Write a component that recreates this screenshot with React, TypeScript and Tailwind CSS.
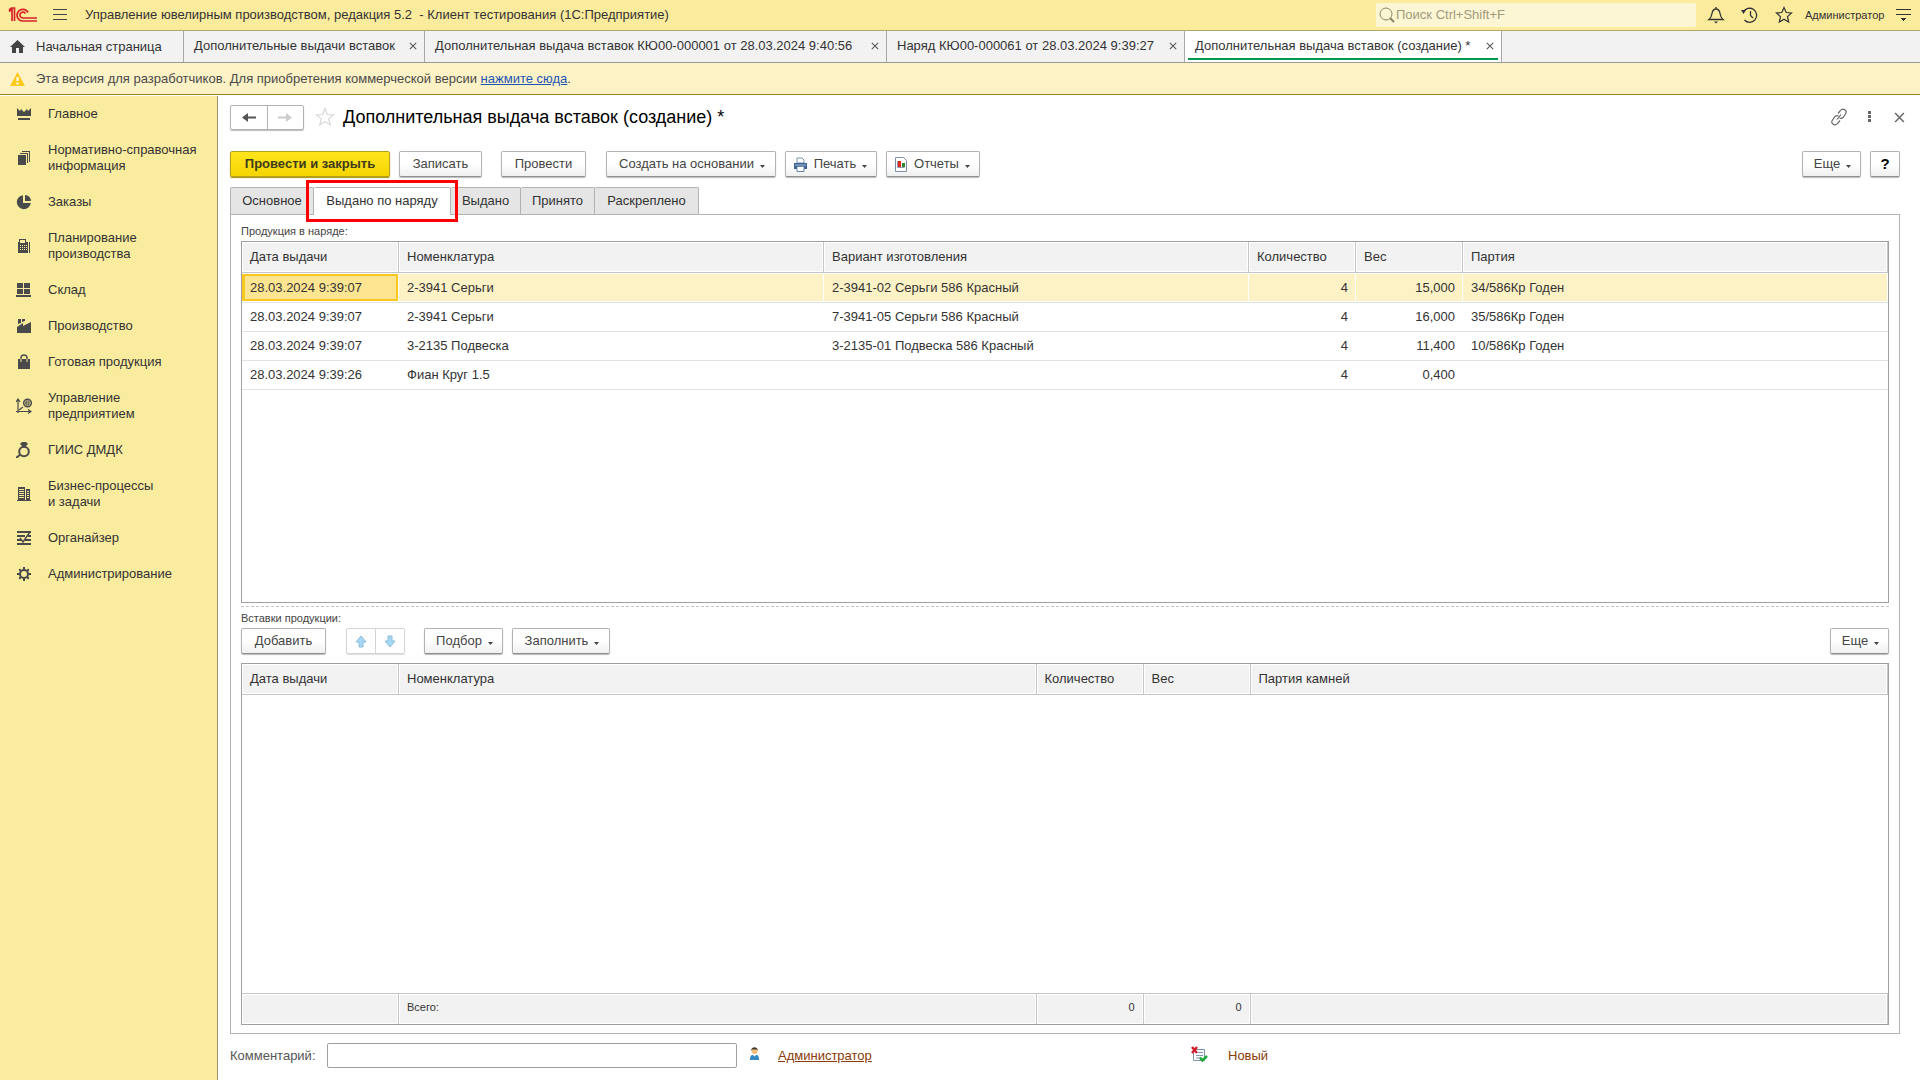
import React from 'react';

type Align = 'left' | 'right';

interface Column {
  title: string;
  width?: string;
  align?: Align;
}

const sections = [
  { icon: 'crown', lines: ['Главное'] },
  { icon: 'books', lines: ['Нормативно-справочная', 'информация'] },
  { icon: 'pie', lines: ['Заказы'] },
  { icon: 'calc', lines: ['Планирование', 'производства'] },
  { icon: 'store', lines: ['Склад'] },
  { icon: 'factory', lines: ['Производство'] },
  { icon: 'bag', lines: ['Готовая продукция'] },
  { icon: 'chart', lines: ['Управление', 'предприятием'] },
  { icon: 'ring', lines: ['ГИИС ДМДК'] },
  { icon: 'building', lines: ['Бизнес-процессы', 'и задачи'] },
  { icon: 'organizer', lines: ['Органайзер'] },
  { icon: 'gear', lines: ['Администрирование'] },
];

const windows = [
  { title: 'Дополнительные выдачи вставок', width: 'w-[241px]' },
  { title: 'Дополнительная выдача вставок КЮ00-000001 от 28.03.2024 9:40:56', width: 'w-[462px]' },
  { title: 'Наряд КЮ00-000061 от 28.03.2024 9:39:27', width: 'w-[298px]' },
  { title: 'Дополнительная выдача вставок (создание) *', width: 'w-[317px]', active: true },
];

const pages = [
  { title: 'Основное', width: 'w-[84px]' },
  { title: 'Выдано по наряду', width: 'w-[137px]', active: true },
  { title: 'Выдано', width: 'w-[70px]' },
  { title: 'Принято', width: 'w-[74px]' },
  { title: 'Раскреплено', width: 'w-[104px]' },
];

const productColumns: Column[] = [
  { title: 'Дата выдачи', width: 'w-[157px]' },
  { title: 'Номенклатура' },
  { title: 'Вариант изготовления' },
  { title: 'Количество', width: 'w-[107px]', align: 'right' },
  { title: 'Вес', width: 'w-[107px]', align: 'right' },
  { title: 'Партия' },
];

const productRows = [
  ['28.03.2024 9:39:07', '2-3941 Серьги', '2-3941-02 Серьги 586 Красный', '4', '15,000', '34/586Кр Годен'],
  ['28.03.2024 9:39:07', '2-3941 Серьги', '7-3941-05 Серьги 586 Красный', '4', '16,000', '35/586Кр Годен'],
  ['28.03.2024 9:39:07', '3-2135 Подвеска', '3-2135-01 Подвеска 586 Красный', '4', '11,400', '10/586Кр Годен'],
  ['28.03.2024 9:39:26', 'Фиан Круг 1.5', '', '4', '0,400', ''],
];

const insertColumns: Column[] = [
  { title: 'Дата выдачи', width: 'w-[157px]' },
  { title: 'Номенклатура' },
  { title: 'Количество', width: 'w-[107px]' },
  { title: 'Вес', width: 'w-[107px]' },
  { title: 'Партия камней' },
];

const SectionIcon = ({ name }: { name: string }) => {
  const shapes: Record<string, React.ReactNode> = {
    crown: <path d="M1 2l3 3 1-2 3 3 3-3 1 2 3-3v8H1zM2 12h12v2H2z" />,
    books: (
      <g shapeRendering="crispEdges">
        <path d="M2 5h8v10H2z" />
        <path d="M4 3h8v10h-1V4H4zM6 1h8v11h-1V2H6z" />
      </g>
    ),
    pie: (
      <>
        <path d="M7 1.2V9h7.8A7 7 0 1 1 7 1.2z" />
        <path d="M9 1a6 6 0 0 1 6 6H9z" />
      </>
    ),
    calc: (
      <g shapeRendering="crispEdges">
        <path
          fillRule="evenodd"
          d="M3 1h7v3h2v11H2V4h1zM4 2v3h5V2zM4 7v1h1V7zm2 0v1h1V7zm2 0v1h1V7zM4 9v1h1V9zm2 0v1h1V9zm2 0v1h1V9zM4 11v1h1v-1zm2 0v1h1v-1zm2 0v1h1v-1zM10 7v1h1V7zm0 2v1h1V9zm0 2v1h1v-1z"
        />
        <path d="M13 4h1v11h-1z" />
      </g>
    ),
    store: <path shapeRendering="crispEdges" d="M1 1h6v5H1zM8 1h6v5H8zM1 7h6v5H1zM8 7h6v5H8zM0 13h15v2H0z" />,
    factory: <path d="M2 1h3v4L2 6zM6 1h3v2L6 4zM1 9l6-4v3l8-4v11H1z" />,
    bag: (
      <>
        <path d="M2 5h12v10H2z" />
        <path d="M5 8V4a3 3 0 0 1 6 0v4" fill="none" stroke="#faec9f" strokeWidth="1" />
        <path d="M5 5V4a3 3 0 0 1 6 0v1" fill="none" stroke="#4a4a4a" strokeWidth="1.4" />
      </>
    ),
    chart: (
      <>
        <path d="M2 15V2M0 13.5h14M0 4l2-3 2 3M12 11.500l3 2-3 2M3 12l4-3" fill="none" stroke="#4a4a4a" strokeWidth="1.2" />
        <circle cx="11.500" cy="5" r="3.800" fill="none" stroke="#4a4a4a" strokeWidth="1.500" />
        <path d="M9 5h4M10 3h3v4h-3z" fill="none" stroke="#4a4a4a" strokeWidth="1" />
      </>
    ),
    ring: (
      <>
        <circle cx="8" cy="9.500" r="4.800" fill="none" stroke="#4a4a4a" strokeWidth="2" />
        <path d="M6 0h4l2 2-4 4-4-4z" />
        <path d="M4.500 12.500L0 16" stroke="#4a4a4a" strokeWidth="2" />
      </>
    ),
    building: (
      <g shapeRendering="crispEdges">
        <path
          fillRule="evenodd"
          d="M2 1h7v13H2zM3 3v1h5V3zm0 2v1h5V5zm0 2v1h5V7zm0 2v1h5V9zm0 2v1h5v-1zM10 3h4v11h-4zM11 5v1h2V5zm0 2v1h2V7zm0 2v1h2V9zm0 2v1h2v-1z"
        />
        <path d="M1 14h14v1H1z" />
      </g>
    ),
    organizer: (
      <>
        <path d="M1 1h14v2H1zM1 5h8v2H1zM12 5h3v2h-3zM1 9h4v2H1zM9 9h6v2H9zM1 13h14v2H1z" />
        <path d="M4 8l3 4 7-10" fill="none" stroke="#4a4a4a" strokeWidth="1.500" />
      </>
    ),
    gear: (
      <>
        <circle cx="8" cy="8" r="4" fill="none" stroke="#4a4a4a" strokeWidth="2" />
        <path
          d="M8 1v3M8 12v3M1 8h3M12 8h3M3.200 3.200l2 2M10.800 10.800l2 2M12.800 3.200l-2 2M5.200 10.800l-2 2"
          stroke="#4a4a4a"
          strokeWidth="2"
        />
      </>
    ),
  };
  return (
    <svg width="16" height="16" viewBox="0 0 16 16" fill="#4a4a4a" className="shrink-0">
      {shapes[name]}
    </svg>
  );
};

const Cross = ({ size, color }: { size: number; color: string }) => (
  <svg width={size} height={size} viewBox="0 0 10 10" stroke={color} strokeWidth="1.300">
    <path d="M1 1l8 8M9 1l-8 8" />
  </svg>
);

const Caret = () => (
  <svg width="5" height="3" viewBox="0 0 5 3" fill="#444" className="mt-1 shrink-0">
    <path d="M0 0h5L2.500 3z" />
  </svg>
);

const buttonLook =
  'flex h-[26px] shrink-0 items-center justify-center rounded-xs border border-[#b3b3b3] border-b-[#8f8f8f] bg-linear-to-b from-white from-50% to-[#f0f0f0] shadow-[0_1px_1px_#bbb] text-[#444]';

const Button = ({ width, menu, children }: { width: string; menu?: boolean; children: React.ReactNode }) => (
  <button type="button" className={`${buttonLook} ${width} ${menu ? 'gap-[6px] pl-[2px]' : ''}`}>
    {children}
    {menu && <Caret />}
  </button>
);

const HeadRow = ({ columns }: { columns: Column[] }) => (
  <thead>
    <tr className="h-[31px]">
      {columns.map((column) => (
        <th
          key={column.title}
          scope="col"
          className={`${column.width ?? ''} border-r border-b border-[#c6c6c6] bg-[#f2f2f2] px-2 text-left font-normal shadow-[inset_0_0_0_1px_white]`}
        >
          {column.title}
        </th>
      ))}
    </tr>
  </thead>
);

const TitleBar = () => (
  <header className="flex h-[31px] shrink-0 items-center border-b border-[#b0a96b] bg-[#fbeb9d] pr-[9px] pl-2">
    <svg width="30" height="16" viewBox="0 0 30 16" fill="none" stroke="#d8232a" strokeWidth="1.700">
      <path d="M1 4.500L4 2v12M6.500 14V1L3.500 1L1 3" />
      <path d="M20 5.500A5.800 5.800 0 1 0 14.500 14H29" />
      <path d="M17.500 6.500A3 3 0 1 0 14.500 11H29" />
    </svg>
    <button type="button" aria-label="Меню" className="ml-[15px]">
      <svg width="15" height="12" viewBox="0 0 15 12" fill="#444" shapeRendering="crispEdges">
        <path d="M0 0h14v1H0zM0 5h14v1H0zM0 10h14v1H0z" />
      </svg>
    </button>
    <h1 className="ml-[17px] whitespace-pre">Управление ювелирным производством, редакция 5.2  - Клиент тестирования (1С:Предприятие)</h1>
    <label className="ml-auto flex h-6 w-80 items-center rounded-xs bg-[#fdf6d5] pl-[3px]">
      <svg width="16" height="18" viewBox="0 0 16 18" fill="none" stroke="#8b8565">
        <circle cx="7" cy="8" r="6" />
        <path d="M11 12l4 4" strokeWidth="2" />
      </svg>
      <input
        type="text"
        aria-label="Поиск"
        placeholder="Поиск Ctrl+Shift+F"
        className="min-w-0 flex-1 bg-transparent pb-px pl-px outline-none placeholder:text-[#a09a7c]"
      />
    </label>
    <div className="ml-[11px] flex items-center gap-4 text-[#333]">
      <button type="button" aria-label="Уведомления">
        <svg width="18" height="18" viewBox="0 0 18 18" fill="none" stroke="currentColor" strokeWidth="1.300">
          <path d="M2 13.500h14c-2-1.500-2.500-3-3-6C12.500 4.500 11 3 9 3S5.500 4.500 5 7.500c-.5 3-1 4.500-3 6zM9 1v2" />
          <path d="M7 15.500h4l-2 2z" fill="currentColor" stroke="none" />
        </svg>
      </button>
      <button type="button" aria-label="История">
        <svg width="18" height="18" viewBox="0 0 18 18" fill="none" stroke="currentColor" strokeWidth="1.300">
          <path d="M2.500 6a7 7 0 1 1 1 8M9.500 5v4.500L12 12" />
          <path d="M0 4h5L2.500 8z" fill="currentColor" stroke="none" />
        </svg>
      </button>
      <button type="button" aria-label="Избранное">
        <svg width="18" height="18" viewBox="0 0 18 18" fill="none" stroke="currentColor" strokeWidth="1.200">
          <path d="M9 1.500l2.200 5 5.300.5-4 3.600 1.200 5.400L9 13.200 4.300 16l1.200-5.400-4-3.600 5.300-.5z" />
        </svg>
      </button>
    </div>
    <button type="button" className="ml-3 w-[78px] text-left text-[11px]">
      Администратор
    </button>
    <button type="button" aria-label="Сервис" className="ml-[13px]">
      <svg width="15" height="13" viewBox="0 0 15 13" fill="#333" shapeRendering="crispEdges">
        <path d="M0 0h15v1H0zM0 5h15v1H0zM5 9h5l-2.500 3z" />
      </svg>
    </button>
  </header>
);

const WindowTabs = () => (
  <nav className="flex h-8 shrink-0 border-b border-[#9a9c9a] bg-[#f2f2f2]">
    <button type="button" className="flex w-[184px] items-center gap-[11px] border-r border-[#a9a9a9] pl-[10px]">
      <svg width="15" height="13" viewBox="0 0 15 13" fill="#444">
        <path d="M7.500 0L15 7h-2v6H9V8H6v5H2V7H0z" />
      </svg>
      Начальная страница
    </button>
    {windows.map((item) => (
      <div key={item.title} className={`${item.width} border-r border-[#a9a9a9] px-[3px] ${item.active ? 'bg-white' : ''}`}>
        <div
          className={`flex h-[29px] items-center justify-between border-b-2 pt-[3px] pr-1 pl-[7px] ${
            item.active ? 'border-[#009b4c]' : 'border-transparent'
          }`}
        >
          <button type="button" className="whitespace-nowrap">
            {item.title}
          </button>
          <button type="button" aria-label="Закрыть вкладку">
            <Cross size={8} color="#555" />
          </button>
        </div>
      </div>
    ))}
  </nav>
);

const Sidebar = () => (
  <aside className="w-[218px] shrink-0 border-r border-[#9c9468] bg-[#faec9f]">
    <ul>
      {sections.map((section) => (
        <li key={section.icon}>
          <button type="button" className="flex w-full items-center gap-4 py-[10px] pl-4 text-left leading-4">
            <SectionIcon name={section.icon} />
            <span>
              {section.lines.map((line) => (
                <span key={line} className="block whitespace-nowrap">
                  {line}
                </span>
              ))}
            </span>
          </button>
        </li>
      ))}
    </ul>
  </aside>
);

const FormHeader = () => (
  <div className="flex h-[26px] items-center">
    <div className="flex h-[25px] rounded-xs border border-[#b3b3b3] shadow-[0_1px_1px_#bbb]">
      <button type="button" aria-label="Назад" className="flex w-[37px] items-center justify-center border-r border-[#b3b3b3]">
        <svg width="15" height="11" viewBox="0 0 15 11" fill="#555">
          <path d="M0 5.500L6 1v3.500h8v2H6V10z" />
        </svg>
      </button>
      <button type="button" aria-label="Вперед" className="flex w-[35px] items-center justify-center">
        <svg width="15" height="11" viewBox="0 0 15 11" fill="#ccc">
          <path d="M14 5.500L8 1v3.500H0v2h8V10z" />
        </svg>
      </button>
    </div>
    <button type="button" aria-label="В избранное" className="ml-[11px]">
      <svg width="20" height="20" viewBox="0 0 20 20" fill="none" stroke="#d8d8d8" strokeWidth="1.200">
        <path d="M10 1.500l2.300 6 6.200.4-4.800 4 1.600 6.100L10 14.600 4.700 18l1.600-6.100-4.800-4 6.200-.4z" />
      </svg>
    </button>
    <h2 className="ml-[8px] text-[18px] text-black">Дополнительная выдача вставок (создание) *</h2>
    <div className="-mr-[5px] ml-auto flex items-center text-[#666]">
      <button type="button" aria-label="Получить ссылку">
        <svg width="18" height="18" viewBox="0 0 18 18" fill="none" stroke="currentColor" strokeWidth="1.200">
          <path d="M8 5.500l2.500-3a3 3 0 0 1 5 3.500L13 9.500c-1 1-2.500 1-3.500.5M10 12.500l-2.500 3a3 3 0 0 1-5-3.500L5 8.500c1-1 2.500-1 3.500-.5M7 11.500L11 6.500" />
        </svg>
      </button>
      <button type="button" aria-label="Дополнительно" className="ml-5">
        <svg width="4" height="12" viewBox="0 0 4 12" fill="currentColor">
          <path d="M0 0h3v3H0zM0 4h3v3H0zM0 8h3v3H0z" />
        </svg>
      </button>
      <button type="button" aria-label="Закрыть" className="ml-[22px]">
        <Cross size={11} color="#666" />
      </button>
    </div>
  </div>
);

const Toolbar = () => (
  <div className="mt-[21px] flex items-center">
    <button
      type="button"
      className="h-[26px] w-[160px] rounded-xs border border-[#b59f1d] bg-linear-to-b from-[#ffe41c] to-[#f5d600] font-bold text-[#3f3a1c] shadow-[0_1px_1px_#a89000]"
    >
      Провести и закрыть
    </button>
    <div className="ml-[9px] flex gap-[19px]">
      <Button width="w-[83px]">Записать</Button>
      <Button width="w-[85px]">Провести</Button>
    </div>
    <div className="ml-5 flex gap-[9px]">
      <Button width="w-[170px]" menu>Создать на основании</Button>
      <Button width="w-[92px]" menu>
        <svg width="15" height="15" viewBox="0 0 15 15" className="-ml-1">
          <path d="M4 1h5l2 2v3H4z" fill="#fff" stroke="#7d93ad" />
          <path d="M1 6h13v6H1z" fill="#3a638f" />
          <path d="M2 8h11" stroke="#a8c0dc" />
          <path d="M4 9.500h7v5H4z" fill="#fff" stroke="#6384a8" />
        </svg>
        Печать
      </Button>
      <Button width="w-[94px]" menu>
        <svg width="14" height="15" viewBox="0 0 14 15" className="-ml-1">
          <path d="M1.500.5h8l3 3v11h-11z" fill="#fff" stroke="#7e90a8" />
          <path d="M3.500 4v6.500h7" fill="none" stroke="#8a9ab0" />
          <path d="M4 4h3v6H4z" fill="#e3261b" />
          <path d="M8 6h3v4H8z" fill="#2c8c2c" />
        </svg>
        Отчеты
      </Button>
    </div>
    <div className="ml-auto flex gap-[9px]">
      <Button width="w-[59px]" menu>Еще</Button>
      <Button width="w-[30px]">
        <span className="text-[15px] font-bold text-black">?</span>
      </Button>
    </div>
  </div>
);

const PageTabs = () => (
  <div role="tablist" className="mt-[10px] flex">
    {pages.map((page, index) => (
      <button
        key={page.title}
        type="button"
        role="tab"
        aria-selected={!!page.active}
        className={`${page.width} relative rounded-t-xs border-t border-r border-[#b3b3b3] whitespace-nowrap ${
          index === 0 ? 'border-l' : ''
        } ${page.active ? 'z-10 -mb-px h-[28px] bg-white pb-[2px]' : 'h-[27px] bg-[#e5e5e5] pb-px'}`}
      >
        {page.title}
        {page.active && <span className="absolute -inset-x-[8px] -top-[8px] -bottom-[7px] border-[3px] border-[#ff0000]" />}
      </button>
    ))}
  </div>
);

const ProductTable = () => (
  <div className="min-h-40 flex-1 border border-[#a0a0a0]">
    <table className="w-full table-fixed border-separate border-spacing-0">
      <HeadRow columns={productColumns} />
      <tbody>
        {productRows.map((row, rowIndex) => (
          <tr key={rowIndex} className={rowIndex === 0 ? 'h-[30px]' : 'h-[29px]'}>
            {row.map((value, index) => {
              const selected = rowIndex === 0;
              const look = !selected
                ? ''
                : index === 0
                  ? 'bg-[#fee592] shadow-[inset_0_1px_0_white,inset_-1px_-1px_0_white,inset_0_0_0_3px_#f8c821]'
                  : 'bg-[#fdf2c6] shadow-[inset_-1px_0_0_white,inset_0_1px_0_white,inset_0_-1px_0_white]';
              return (
                <td
                  key={index}
                  className={`border-b border-[#e3e3e3] px-2 ${productColumns[index].align === 'right' ? 'text-right' : ''} ${look}`}
                >
                  {value}
                </td>
              );
            })}
          </tr>
        ))}
      </tbody>
    </table>
  </div>
);

const InsertTable = () => (
  <div className="mt-[9px] flex min-h-40 flex-1 border border-[#a0a0a0]">
    <table className="w-full table-fixed border-separate border-spacing-0">
      <HeadRow columns={insertColumns} />
      <tbody>
        <tr>
          <td colSpan={5} />
        </tr>
      </tbody>
      <tfoot>
        <tr className="h-[31px]">
          {['', 'Всего:', '0', '0', ''].map((value, index) => (
            <td
              key={index}
              className={`border-t border-r border-[#c6c6c6] bg-[#f2f2f2] px-2 pb-1 text-[11px] shadow-[inset_0_0_0_1px_white] ${
                value === '0' ? 'text-right' : ''
              }`}
            >
              {value}
            </td>
          ))}
        </tr>
      </tfoot>
    </table>
  </div>
);

const InsertToolbar = () => (
  <div className="mt-[2px] flex">
    <Button width="w-[85px]">Добавить</Button>
    <div className="ml-5 flex h-[26px] rounded-xs border border-[#d5d5d5] shadow-[0_1px_1px_#ddd]">
      <button type="button" aria-label="Переместить вверх" className="flex w-[29px] items-center justify-center border-r border-[#d5d5d5]">
        <svg width="12" height="13" viewBox="0 0 12 13" fill="#a5d8f5" stroke="#8fbcd8">
          <path d="M6 1l5 6H8v5H4V7H1z" />
        </svg>
      </button>
      <button type="button" aria-label="Переместить вниз" className="flex w-7 items-center justify-center">
        <svg width="12" height="13" viewBox="0 0 12 13" fill="#a5d8f5" stroke="#8fbcd8">
          <path d="M6 12l5-6H8V1H4v5H1z" />
        </svg>
      </button>
    </div>
    <div className="ml-[19px] flex gap-[9px]">
      <Button width="w-[79px]" menu>Подбор</Button>
      <Button width="w-[98px]" menu>Заполнить</Button>
    </div>
    <div className="ml-auto">
      <Button width="w-[59px]" menu>Еще</Button>
    </div>
  </div>
);

const FormFooter = () => (
  <div className="mt-[9px] mb-3 flex h-[25px] items-center">
    <label htmlFor="comment" className="w-[97px] text-[#555]">
      Комментарий:
    </label>
    <input id="comment" type="text" className="h-[25px] w-[410px] rounded-xs border border-[#a0a0a0] px-2 outline-none" />
    <svg width="11" height="14" viewBox="0 0 11 14" className="mb-1 ml-3">
      <circle cx="5.500" cy="4" r="3" fill="#f2bf7a" />
      <path d="M2 4c0-5 7-5 7 0L8 2.500H3z" fill="#4b3a2a" />
      <path d="M1 13c0-4 1-5 3-5l1.500 1.500L7 8c2 0 3 1 3 5z" fill="#3389c0" />
    </svg>
    <a href="#" className="ml-[18px] w-[413px] text-[#8a3a06] underline">
      Администратор
    </a>
    <svg width="17" height="16" viewBox="0 0 17 16" className="mb-1">
      <path d="M2.500 3.500h11v11h-11z" fill="#fff" stroke="#8094b0" />
      <path d="M7 6.500h5M5 9.500h7M5 12h4" stroke="#8094b0" />
      <path d="M1 1l5 6M6 1L1 7" stroke="#d81e2c" strokeWidth="2.500" />
      <path d="M9 11.500l2.500 3L16 10" fill="none" stroke="#1fa83a" strokeWidth="2.500" />
    </svg>
    <span className="ml-[20px] text-[#8a3a06]">Новый</span>
  </div>
);

const App = () => {
  return (
    <div className="flex h-screen flex-col bg-white font-['Liberation_Sans',Arial,sans-serif] text-[13px] leading-4 text-[#333]">
      <TitleBar />
      <WindowTabs />
      <div className="flex h-8 shrink-0 items-center border-b border-[#9b8019] bg-[#fdf2c6] pl-[10px] text-[#4a4a4a]">
        <svg width="15" height="14" viewBox="0 0 15 14" className="mr-[11px]">
          <path d="M7.500 0L15 14H0z" fill="#fcc91c" />
          <path d="M6.500 5h2v4h-2zM6.500 10.500h2v2h-2z" fill="#fff" />
        </svg>
        <p>
          Эта версия для разработчиков. Для приобретения коммерческой версии{' '}
          <a href="#" className="text-[#1d55b5] underline">
            нажмите сюда
          </a>
          .
        </p>
      </div>
      <div className="mt-px flex min-h-0 flex-1">
        <Sidebar />
        <main className="flex min-w-0 flex-1 flex-col pt-2 pr-5 pl-3">
          <FormHeader />
          <Toolbar />
          <PageTabs />
          <section className="flex min-h-0 flex-1 flex-col border border-[#b3b3b3] px-[10px] pt-2 pb-[8px]">
            <h3 className="mb-[2px] text-[11px] text-[#444]">Продукция в наряде:</h3>
            <ProductTable />
            <div className="mt-[3px] border-t border-dashed border-[#c6c6c6]" />
            <h3 className="mt-[3px] text-[11px] text-[#444]">Вставки продукции:</h3>
            <InsertToolbar />
            <InsertTable />
          </section>
          <FormFooter />
        </main>
      </div>
    </div>
  );
};

export default App;
